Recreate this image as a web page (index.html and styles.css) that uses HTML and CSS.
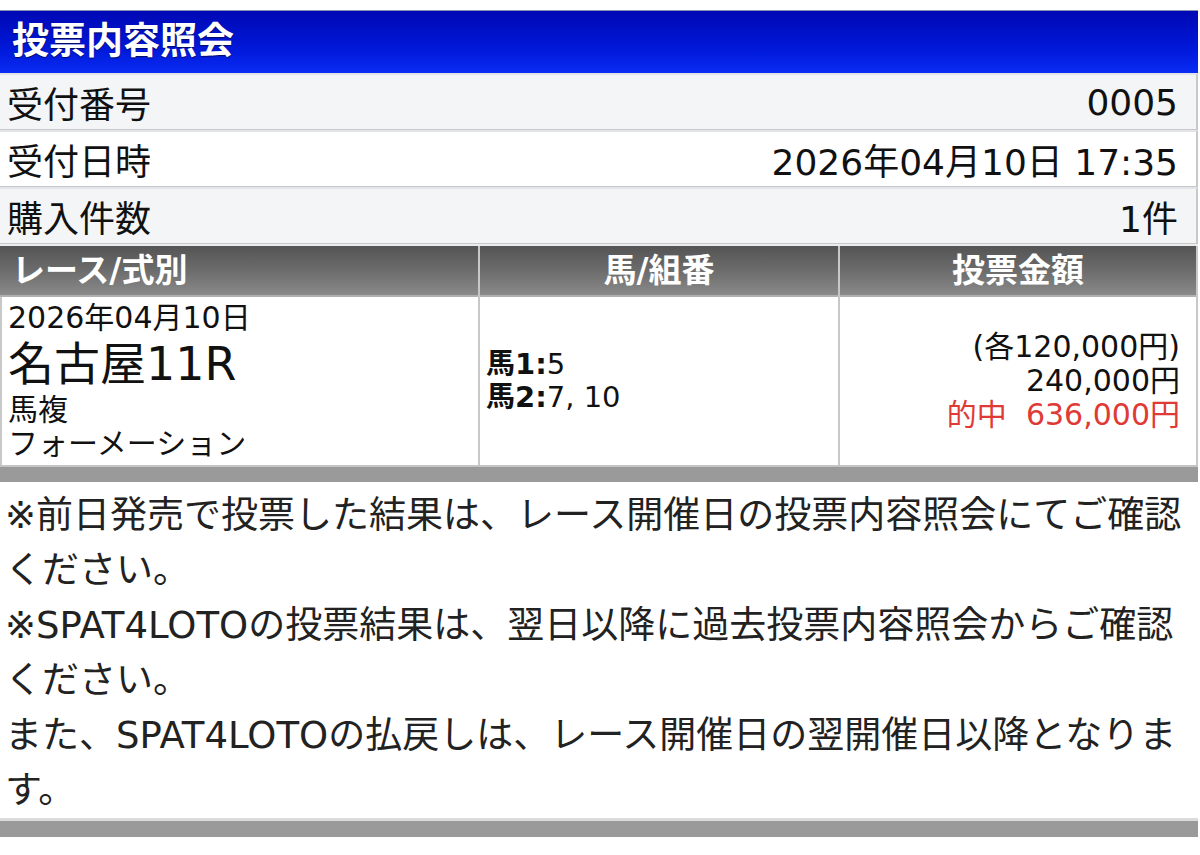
FILE: index.html
```html
<!DOCTYPE html>
<html lang="ja">
<head>
    <meta charset="UTF-8">
    <meta name="viewport" content="width=device-width, initial-scale=1.0">
    <title>投票内容照会</title>
    <link rel="stylesheet" href="styles.css">
</head>
<body>
    <div class="pagina">
        <h1 class="titulo">投票内容照会</h1>

        <!-- Datos del recibo -->
        <div class="fila fila-gris">
            <span>受付番号</span>
            <span>0005</span>
        </div>
        <div class="fila">
            <span>受付日時</span>
            <span>2026年04月10日 17:35</span>
        </div>
        <div class="fila fila-gris">
            <span>購入件数</span>
            <span>1件</span>
        </div>

        <!-- Tabla de apuestas -->
        <div class="tabla">
            <div class="cabecera izq">レース/式別</div>
            <div class="cabecera">馬/組番</div>
            <div class="cabecera">投票金額</div>

            <div class="celda carrera">
                <div>2026年04月10日</div>
                <div class="carrera-nombre">名古屋11R</div>
                <div>馬複</div>
                <div>フォーメーション</div>
            </div>
            <div class="celda caballos">
                <div><b>馬1:</b>5</div>
                <div><b>馬2:</b>7, 10</div>
            </div>
            <div class="celda importe">
                <div>(各120,000円)</div>
                <div>240,000円</div>
                <div class="acierto">的中&nbsp;&nbsp;636,000円</div>
            </div>
        </div>
        <div class="barra"></div>

        <div class="notas">
            <p>※前日発売で投票した結果は、レース開催日の投票内容照会にてご確認ください。</p>
            <p>※SPAT4LOTOの投票結果は、翌日以降に過去投票内容照会からご確認ください。</p>
            <p>また、SPAT4LOTOの払戻しは、レース開催日の翌開催日以降となります。</p>
        </div>
        <div class="barra barra-pie"></div>
    </div>
</body>
</html>
```

FILE: styles.css
```css
body {
    margin: 0;
    background: #fff;
    font-family: "DejaVu Sans", "Noto Sans CJK JP", sans-serif;
    color: #111;
}
.pagina {
    width: 1198px;
    padding-top: 10px;
}
.titulo {
    margin: 0;
    height: 62px;
    line-height: 62px;
    padding-left: 12px;
    border-top: 1px solid #8890b8;
    background: linear-gradient(#0008b4, #0018d8 60%, #0a2cf4);
    color: #fff;
    font-size: 37px;
    font-weight: bold;
    text-shadow: 0 1px 1px #000a60;
}
.fila {
    display: flex;
    justify-content: space-between;
    align-items: center;
    height: 54px;
    padding: 0 18px 0 7px;
    font-size: 36px;
    border-top: 2px solid #e2e4ea;
    border-bottom: 1px solid #c8c8c8;
    border-right: 2px solid #c8c8c8;
    background: #fff;
}
.fila-gris {
    background: #f3f5f7;
}
.tabla {
    display: grid;
    grid-template-columns: 478px 358px 1fr;
    border-top: 2px solid #ececec;
    background: #c8c8c8;
    gap: 0 2px;
    padding-right: 2px;
}
.cabecera {
    height: 49px;
    line-height: 49px;
    text-align: center;
    color: #fff;
    font-size: 33px;
    font-weight: bold;
    background: linear-gradient(#545454, #6c6c6c 50%, #8a8a8a);
    border-bottom: 2px solid #b0b0b0;
}
.izq {
    text-align: left;
    padding-left: 12px;
}
.celda {
    background: #fff;
    height: 168px;
    font-size: 30px;
    display: flex;
    flex-direction: column;
    justify-content: center;
}
.carrera {
    margin-left: 2px;
    padding-left: 6px;
    line-height: 34px;
}
.carrera-nombre {
    font-size: 46px;
    line-height: 58px;
}
.caballos {
    padding-left: 6px;
    font-size: 29px;
    line-height: 33px;
}
.importe {
    text-align: right;
    padding-right: 16px;
    line-height: 34px;
}
.acierto {
    color: #e03a36;
}
.barra {
    height: 15px;
    background: #9a9a9a;
    border-top: 2px solid #c4c4c4;
}
.notas {
    padding: 0 6px 0 5px;
    font-size: 37px;
    line-height: 55px;
    color: #222;
}
.notas p {
    margin: 0;
}
.notas p:first-child {
    margin-top: 6px;
}
.barra-pie {
    height: 16px;
    border-top: 3px solid #dcdcdc;
}
```
